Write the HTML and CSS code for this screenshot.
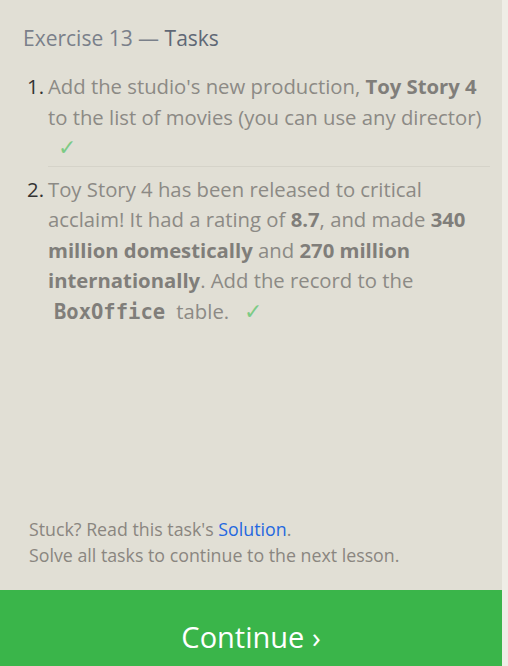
FILE: index.html
```html
<!DOCTYPE html>
<html>
<head>
<meta charset="utf-8">
<link rel="stylesheet" href="styles.css">
</head>
<body>
<div class="panel">
  <div class="content">
    <h2 class="title">Exercise 13 — <span class="title-strong">Tasks</span></h2>
    <ol class="tasks">
      <li class="task">
        <span class="num">1.</span>
        <div class="task-text">Add the studio's new production, <b>Toy Story 4</b> to the list of movies (you can use any director) <span class="check">✓</span></div>
      </li>
      <li class="task">
        <span class="num">2.</span>
        <div class="task-text">Toy Story 4 has been released to critical acclaim! It had a rating of <b>8.7</b>, and made <b>340 million domestically</b> and <b>270 million internationally</b>. Add the record to the <code class="code">BoxOffice</code> table. <span class="check">✓</span></div>
      </li>
    </ol>
  </div>
  <div class="footer">
    <p class="hint">Stuck? Read this task's <a class="link" href="#">Solution</a>.</p>
    <p class="hint">Solve all tasks to continue to the next lesson.</p>
  </div>
  <div class="continue">Continue ›</div>
</div>
</body>
</html>
```
FILE: styles.css
```css
html, body {
  margin: 0;
  padding: 0;
  height: 100%;
  overflow: hidden;
}
body {
  background: #efede6;
  font-family: "Open Sans", "Noto Sans", sans-serif;
}
.panel {
  width: 502px;
  height: 666px;
  background: #e1dfd5;
  display: flex;
  flex-direction: column;
}
.content {
  flex: 1;
  padding: 22px 12px 0 23px;
}
.title {
  margin: 0;
  font-size: 21px;
  font-weight: 400;
  color: #7a808a;
  line-height: 32px;
}
.title-strong {
  color: #5f6875;
}
.tasks {
  list-style: none;
  margin: 17px 0 0 0;
  padding: 0;
}
.task {
  display: flex;
  gap: 4px;
  font-size: 20.3px;
  line-height: 30.5px;
  color: #8c8a85;
}
.task + .task {
  border-top: 1px solid #d5d3c9;
  margin-left: 25px;
  padding-top: 7px;
}
.task + .task .num {
  margin-left: -25px;
}
.task:first-child {
  padding-bottom: 2px;
}
.num {
  color: #333;
  width: 21px;
  flex: none;
  text-align: right;
}
.task-text b {
  color: #807e7a;
  font-weight: 700;
}
.check {
  color: #7ccb85;
  margin-left: 10px;
  font-size: 22px;
  font-family: "DejaVu Sans", sans-serif;
  font-weight: 300;
}
.code {
  font-family: "DejaVu Sans Mono", monospace;
  font-weight: 700;
  font-size: 20.5px;
  color: #807e7a;
  padding: 0 6px;
}
.footer {
  padding: 0 0 22px 29px;
}
.hint {
  margin: 0;
  font-size: 17.8px;
  line-height: 26px;
  color: #8a8680;
}
.link {
  color: #2468e0;
  text-decoration: none;
}
.continue {
  flex: none;
  height: 94px;
  background: #3ab54a;
  color: #fff;
  font-size: 29px;
  line-height: 94px;
  text-align: center;
  margin-bottom: -18px;
}
```
